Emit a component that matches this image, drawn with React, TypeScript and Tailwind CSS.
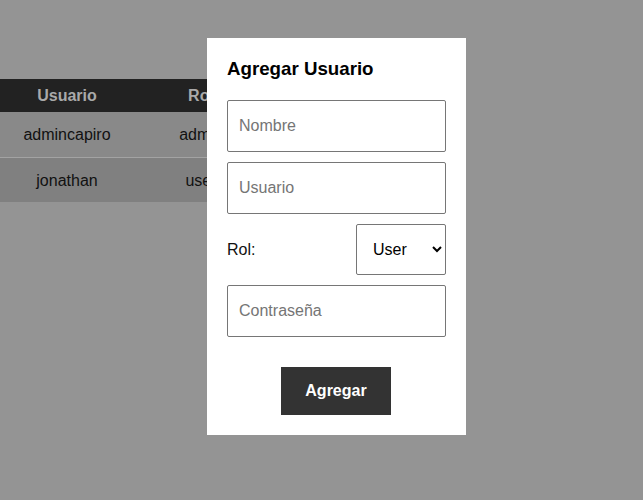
import React from "react";

const rows = [
  { usuario: "admincapiro", rol: "admin" },
  { usuario: "jonathan", rol: "user" },
];

export default function App() {
  return (
    <div className="relative min-h-[500px] bg-[#949494] font-['Liberation_Sans',Arial,sans-serif]">
      <div className="pt-[79px]">
        <table className="w-[402px] border-collapse text-[16px]">
          <thead>
            <tr className="h-[33px] bg-[#222222] text-[#a9a9a9]">
              <th className="w-[134px] font-bold">Usuario</th>
              <th className="w-[134px] font-bold">Rol</th>
              <th className="w-[134px] font-bold">Acciones</th>
            </tr>
          </thead>
          <tbody className="text-[#111111]">
            {rows.map((r, i) => (
              <tr
                key={r.usuario}
                className={
                  i === 0
                    ? "h-[45px] border-b border-[#a3a3a3] bg-[#898989]"
                    : "h-[45px] bg-[#808080]"
                }
              >
                <td className="pt-[2px] text-center">{r.usuario}</td>
                <td className="pt-[2px] text-center">{r.rol}</td>
                <td className="text-center"></td>
              </tr>
            ))}
          </tbody>
        </table>
      </div>

      <div className="absolute left-[207px] top-[38px] w-[259px] bg-white p-5">
        <h2 className="text-[18.72px] leading-[22px] font-bold text-black">Agregar Usuario</h2>

        <div className="mt-5 flex flex-col gap-[10px]">
          <input
            placeholder="Nombre"
            className="h-[52px] w-full rounded-[2px] border border-[#767676] px-[11px] text-[16px] text-black placeholder:text-[#757575] outline-none"
          />
          <input
            placeholder="Usuario"
            className="h-[52px] w-full rounded-[2px] border border-[#767676] px-[11px] text-[16px] text-black placeholder:text-[#757575] outline-none"
          />
          <div className="flex items-center justify-between">
            <label className="text-[16px] text-[#111111]">Rol:</label>
            <select
              defaultValue="user"
              className="h-[51px] w-[90px] rounded-[2px] border border-[#767676] bg-white pl-[12px] text-[16px] text-black"
            >
              <option value="user">User</option>
              <option value="admin">Admin</option>
            </select>
          </div>
          <input
            type="password"
            placeholder="Contraseña"
            className="h-[52px] w-full rounded-[2px] border border-[#767676] px-[11px] text-[16px] text-black placeholder:text-[#757575] outline-none"
          />
        </div>

        <div className="mt-[30px] flex">
          <button className="ml-[54px] h-[48px] w-[110px] bg-[#333333] text-[16px] font-bold text-white">
            Agregar
          </button>
        </div>
      </div>
    </div>
  );
}
